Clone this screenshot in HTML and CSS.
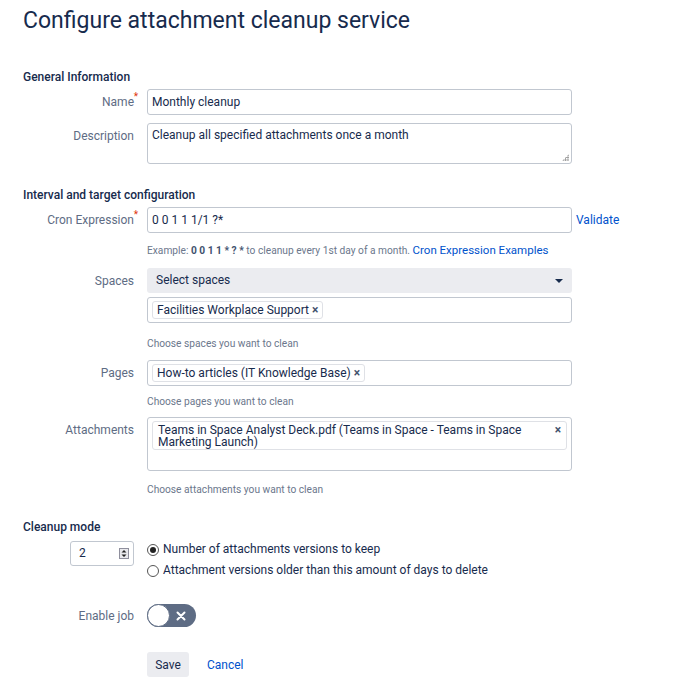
FILE: index.html
```html
<!DOCTYPE html>
<html>
<head>
<meta charset="utf-8">
<link rel="stylesheet" href="styles.css">
</head>
<body>
<div class="page">
  <h1 class="title">Configure attachment cleanup service</h1>

  <h3 class="section">General Information</h3>
  <div class="row">
    <label class="label">Name<span class="req">*</span></label>
    <div class="field"><div class="input">Monthly cleanup</div></div>
  </div>
  <div class="row row-desc">
    <label class="label">Description</label>
    <div class="field"><div class="input textarea">Cleanup all specified attachments once a month<span class="grip"></span></div></div>
  </div>

  <h3 class="section section2">Interval and target configuration</h3>
  <div class="row">
    <label class="label">Cron Expression<span class="req">*</span></label>
    <div class="field cron"><div class="input">0 0 1 1 1/1 ?*</div><a class="link validate">Validate</a></div>
  </div>
  <div class="row help-row">
    <div></div>
    <div class="help">Example: <b>0 0 1 1 * ? *</b> to cleanup every 1st day of a month. <a class="link">Cron Expression Examples</a></div>
  </div>
  <div class="row spaces-row">
    <label class="label">Spaces</label>
    <div class="field">
      <div class="select">Select spaces<span class="caret"></span></div>
      <div class="input tags"><span class="tag">Facilities Workplace Support <span class="x">×</span></span></div>
      <div class="help help-spaces">Choose spaces you want to clean</div>
    </div>
  </div>
  <div class="row pages-row">
    <label class="label">Pages</label>
    <div class="field">
      <div class="input tags"><span class="tag">How-to articles (IT Knowledge Base) <span class="x">×</span></span></div>
      <div class="help help-pages">Choose pages you want to clean</div>
    </div>
  </div>
  <div class="row attach-row">
    <label class="label">Attachments</label>
    <div class="field">
      <div class="input tags attach"><span class="tag tagwide"><span class="tagtext">Teams in Space Analyst Deck.pdf (Teams in Space - Teams in Space Marketing Launch)</span><span class="x">×</span></span></div>
      <div class="help help-attach">Choose attachments you want to clean</div>
    </div>
  </div>

  <h3 class="section section3">Cleanup mode</h3>
  <div class="mode">
    <div class="num">2<span class="spin"><svg width="10" height="11" viewBox="0 0 10 11"><rect x="0.5" y="0.5" width="9" height="10" fill="#e9e9ed" stroke="#8f8f9d"/><path d="M2.5 4.5 L5 2 L7.5 4.5 Z M2.5 6.5 L5 9 L7.5 6.5 Z" fill="#222"/></svg></span></div>
    <div class="radios">
      <div class="radio"><span class="rb on"></span>Number of attachments versions to keep</div>
      <div class="radio"><span class="rb"></span>Attachment versions older than this amount of days to delete</div>
    </div>
  </div>

  <div class="row enable">
    <label class="label">Enable job</label>
    <div class="field"><span class="toggle"><span class="knob"></span><svg class="tx" width="10" height="10" viewBox="0 0 10 10"><path d="M1.5 1.5 L8.5 8.5 M8.5 1.5 L1.5 8.5" stroke="#fff" stroke-width="2" stroke-linecap="round"/></svg></span></div>
  </div>

  <div class="row buttons">
    <div></div>
    <div class="btns"><button class="save">Save</button><a class="link cancel">Cancel</a></div>
  </div>
</div>
</body>
</html>
```

FILE: styles.css
```css
* { box-sizing: border-box; }
body {
  margin: 0;
  font-family: Roboto, "Noto Sans", sans-serif;
  color: #172B4D;
  font-size: 12px;
  background: #fff;
}
.page { padding: 0 0 0 23px; width: 700px; }
.title {
  font-weight: 400;
  font-size: 23px;
  margin: 0;
  padding-top: 6px;
  height: 47px;
  line-height: 30px;
}
.section {
  font-size: 12px;
  font-weight: 500;
  margin: 21px 0 0;
  line-height: 18px;
  height: 18px;
}
.section2 { margin-top: 22px; }
.section3 { margin-top: 20px; }
.row {
  display: grid;
  grid-template-columns: 114px 425px;
  column-gap: 10px;
  margin-top: 8px;
  align-items: start;
}
.section + .row { margin-top: 3px; }
.label {
  text-align: right;
  color: #5E6C84;
  line-height: 26px;
  font-size: 12px;
  position: relative;
  padding-right: 3px;
}
.req {
  color: #DE350B;
  position: absolute;
  right: -1px;
  top: -5px;
  font-size: 10px;
}
.field { position: relative; }
.input {
  height: 26px;
  border: 1px solid #C1C7D0;
  border-radius: 3px;
  padding: 0 4px;
  line-height: 24px;
  font-size: 12px;
  color: #172B4D;
  background: #fff;
}
.textarea {
  height: 41px;
  position: relative;
  line-height: 23px;
}
.grip {
  position: absolute;
  right: 2px;
  bottom: 2px;
  width: 7px;
  height: 7px;
  background:
    radial-gradient(circle, #999 0.8px, transparent 1px) 0 0 / 2.4px 2.4px;
  clip-path: polygon(100% 0, 100% 100%, 0 100%);
}
.cron { display: flex; align-items: center; width: 480px; }
.cron .input { width: 425px; flex: none; }
.validate { margin-left: 4px; }
.link { color: #0052CC; text-decoration: none; font-size: 12px; }
.help-row { margin-top: 9px; }
.help { color: #6B778C; font-size: 10.2px; line-height: 16px; white-space: nowrap; }
.help b { color: #42526E; font-weight: 700; }
.help .link { font-size: 11.5px; }
.spaces-row { margin-top: 9px; }
.help-spaces { margin-top: 13px; }
.pages-row { margin-top: 8px; }
.help-pages { margin-top: 8px; }
.attach-row { margin-top: 7px; }
.help-attach { margin-top: 11px; }
.select {
  height: 25px;
  background: #EBECF0;
  border-radius: 3px;
  padding: 0 9px;
  line-height: 25px;
  position: relative;
}
.caret {
  position: absolute;
  right: 9px;
  top: 11px;
  border-left: 4px solid transparent;
  border-right: 4px solid transparent;
  border-top: 4px solid #172B4D;
}
.select + .tags { margin-top: 4px; }
.tags { padding: 3px 4px; line-height: 18px; }
.tag {
  display: inline-block;
  border: 1px solid #DFE1E6;
  border-radius: 3px;
  padding: 0 4px;
  line-height: 16px;
  font-size: 12px;
  background: #fff;
}
.x { font-size: 12px; font-weight: 700; color: #42526E; }
.attach { height: 54px; }
.tagwide { display: flex; justify-content: space-between; align-items: flex-start; width: 100%; padding: 0 5px 0 5px; line-height: 12px; height: 29px; }
.tagtext { padding-top: 2px; width: 370px; }
.tagwide .x { padding-top: 2px; }
.mode {
  display: flex;
  margin-top: 5px;
  margin-left: 47px;
}
.num {
  width: 64px;
  height: 25px;
  border: 1px solid #C1C7D0;
  border-radius: 3px;
  padding: 0 8px;
  line-height: 23px;
  position: relative;
}
.spin { position: absolute; right: 4px; top: 6px; line-height: 0; }
.radios { margin-left: 13px; margin-top: -2px; }
.radio { display: flex; align-items: center; height: 21px; line-height: 21px; font-size: 12px; }
.rb {
  width: 12px;
  height: 12px;
  border: 1px solid #555;
  border-radius: 50%;
  margin-right: 4px;
  position: relative;
  flex: none;
}
.rb.on::after {
  content: "";
  position: absolute;
  left: 2px; top: 2px;
  width: 6px; height: 6px;
  border-radius: 50%;
  background: #222;
}
.enable { margin-top: 23px; }
.enable .label { line-height: 24px; }
.toggle {
  display: block;
  width: 49px;
  height: 23px;
  border-radius: 12px;
  background: #5E6C84;
  position: relative;
}
.knob {
  position: absolute;
  left: 0; top: 0;
  width: 23px; height: 23px;
  border-radius: 50%;
  background: #fff;
  border: 1px solid #5E6C84;
}
.tx {
  position: absolute;
  right: 10px;
  top: 6.5px;
}
.buttons { margin-top: 24px; }
.btns { display: flex; align-items: center; }
.save {
  font-family: inherit;
  font-size: 12px;
  color: #172B4D;
  background: #EBECF0;
  border: none;
  border-radius: 3px;
  height: 25px;
  width: 42px;
  padding: 0;
}
.cancel { margin-left: 18px; }
```
